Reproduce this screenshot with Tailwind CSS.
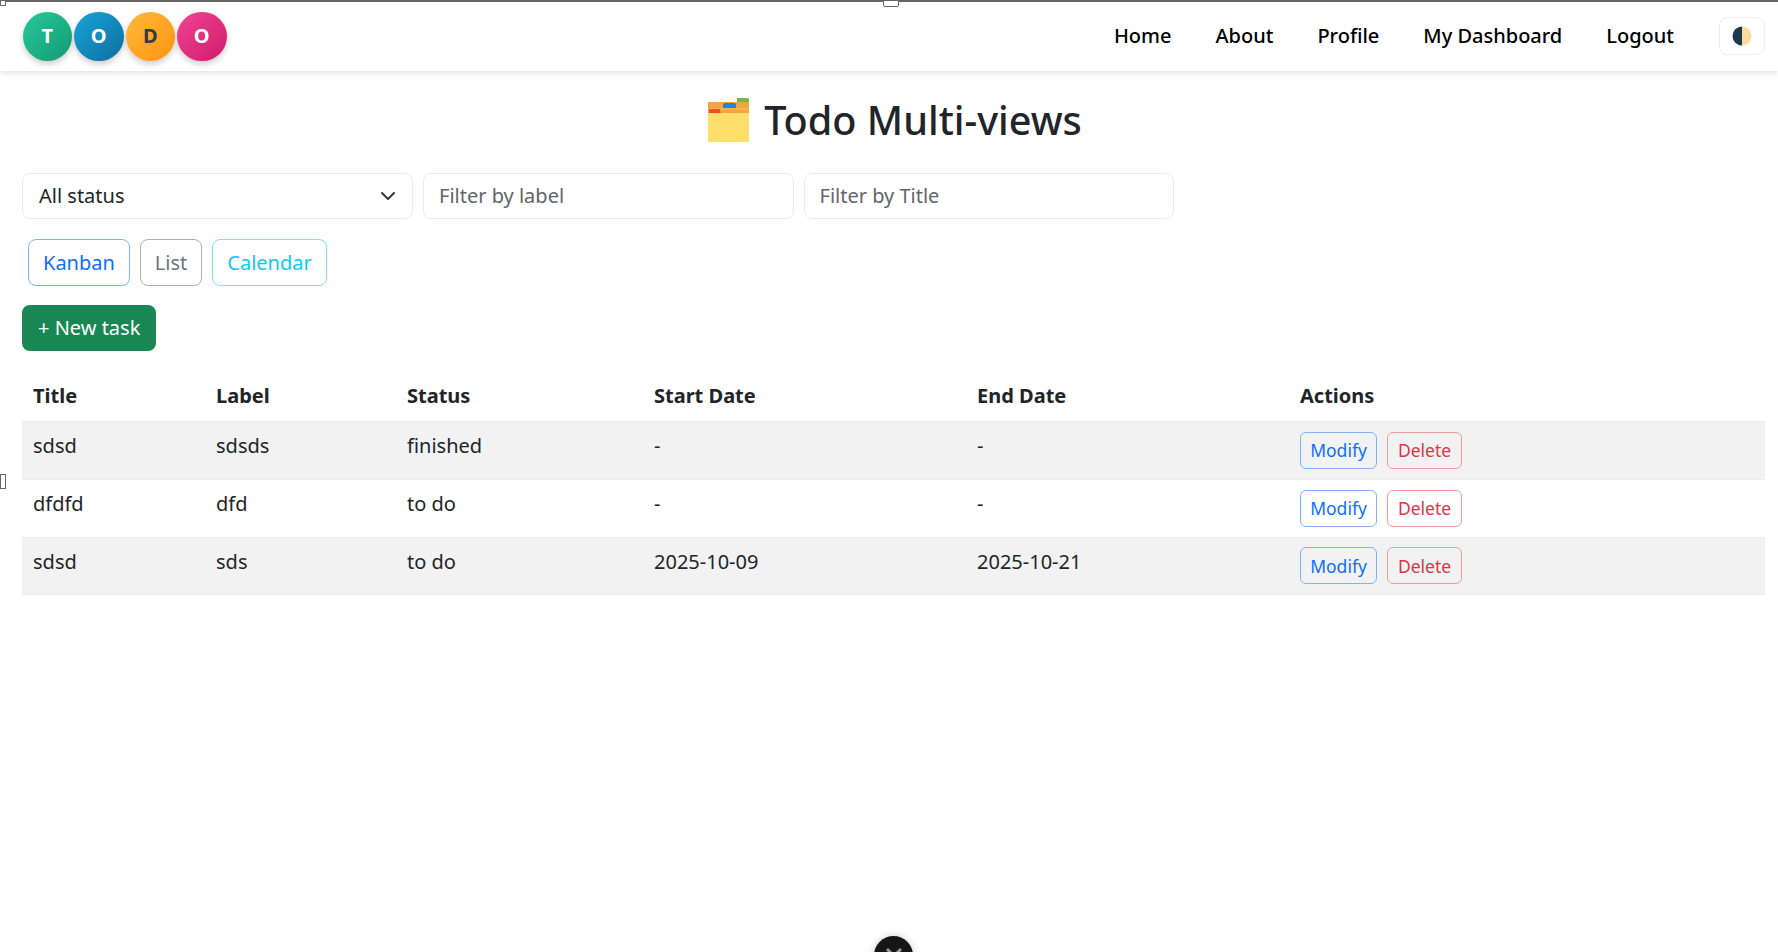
<!DOCTYPE html>
<html lang="en">
<head>
    <meta charset="utf-8">
    <title>Todo Multi-views</title>
    <script src="https://cdn.jsdelivr.net/npm/@tailwindcss/browser@4"></script>
</head>
<body class="relative h-[952px] overflow-hidden bg-white text-[20px] leading-[30px] text-[#212529] font-['Noto_Sans',sans-serif]">

    <!-- navbar -->
    <nav class="h-[71px] flex items-center justify-between pl-[22.5px] pr-[13px] bg-white shadow-[0_2px_6px_rgba(0,0,0,0.12)]">
        <div class="mt-[1px] flex gap-[2px] font-bold text-[20px]">
            <span class="w-[49.5px] h-[49px] rounded-full flex items-center justify-center text-white bg-gradient-to-br from-[#25c998] to-[#159a75] shadow-[0_3px_6px_rgba(0,0,0,0.2)]">T</span>
            <span class="w-[49.5px] h-[49px] rounded-full flex items-center justify-center text-white bg-gradient-to-br from-[#18a4d9] to-[#0f6f9f] shadow-[0_3px_6px_rgba(0,0,0,0.2)]">O</span>
            <span class="w-[49.5px] h-[49px] rounded-full flex items-center justify-center text-[#343a40] bg-gradient-to-br from-[#ffba38] to-[#ff920e] shadow-[0_3px_6px_rgba(0,0,0,0.2)]">D</span>
            <span class="w-[49.5px] h-[49px] rounded-full flex items-center justify-center text-white bg-gradient-to-br from-[#f04393] to-[#cf196b] shadow-[0_3px_6px_rgba(0,0,0,0.2)]">O</span>
        </div>
        <div class="flex items-center font-medium text-black">
            <a class="mr-[44px]">Home</a>
            <a class="mr-[44px]">About</a>
            <a class="mr-[44px]">Profile</a>
            <a class="mr-[44px]">My Dashboard</a>
            <a class="mr-[45px]">Logout</a>
            <button class="w-[46px] h-[38px] flex items-center justify-center bg-white border border-[#eeeeee] rounded-[8px]">
                <svg width="20" height="20" viewBox="0 0 20 20">
                    <path d="M10 0.5a9.5 9.5 0 0 0 0 19z" fill="#1d3a4a"/>
                    <path d="M10 0.5a9.5 9.5 0 0 1 0 19z" fill="#fbdc9c"/>
                </svg>
            </button>
        </div>
    </nav>

    <main class="pl-[22px] pr-[13px]">
        <h1 class="mt-[24px] h-[50px] pl-[3px] flex items-center justify-center gap-[14px] text-[39.6px] leading-[50px] font-medium">
            <svg width="42" height="44" viewBox="0 0 42 44">
                <path d="M29 0h10a2 2 0 0 1 2 2v6H29z" fill="#7cb342"/>
                <rect y="4" width="41" height="12" fill="#f2a641"/>
                <path d="M15 7a2 2 0 0 1 2-2h9a2 2 0 0 1 2 2v3H15z" fill="#1e88d8"/>
                <rect y="10" width="41" height="2" fill="#f9b43f"/>
                <path d="M1 12a1 1 0 0 1 1-1h9a1 1 0 0 1 1 1l1 4H1z" fill="#ef4a35"/>
                <rect y="15" width="41" height="29" fill="#ffdf6b"/>
            </svg>
            <span>Todo Multi-views</span>
        </h1>

        <!-- filters -->
        <div class="mt-[28px] flex gap-[10px]">
            <div class="w-[391px] h-[46px] px-[16px] flex items-center justify-between border border-[#e9ecef] rounded-[8px]">
                <span>All status</span>
                <svg class="mr-[1px]" width="14" height="9" viewBox="0 0 14 9" fill="none" stroke="#343a40" stroke-width="2" stroke-linecap="round" stroke-linejoin="round"><path d="M1 1l6 6 6-6"/></svg>
            </div>
            <div class="w-[370.5px] h-[46px] px-[15px] flex items-center border border-[#e9ecef] rounded-[8px] text-[#60666c]">Filter by label</div>
            <div class="w-[370.5px] h-[46px] px-[15px] flex items-center border border-[#e9ecef] rounded-[8px] text-[#60666c]">Filter by Title</div>
        </div>

        <!-- views -->
        <div class="mt-[20px] ml-[6px] flex gap-[10px]">
            <button class="h-[47px] px-[14px] border border-[#7fb2fe] rounded-[8px] text-[#0d6efd]">Kanban</button>
            <button class="h-[47px] px-[14px] border border-[#adb1b6] rounded-[8px] text-[#6c757d]">List</button>
            <button class="h-[47px] px-[14px] border border-[#7be2f8] rounded-[8px] text-[#0dcaf0]">Calendar</button>
        </div>

        <button class="mt-[19px] h-[46px] px-[16px] rounded-[8px] bg-[#198754] text-white">+ New task</button>

        <table class="mt-[21px] w-full table-fixed border-collapse">
            <colgroup>
                <col class="w-[184px]"><col class="w-[191px]"><col class="w-[247px]"><col class="w-[323px]"><col class="w-[323px]"><col>
            </colgroup>
            <thead>
                <tr class="h-[49px] text-left">
                    <th class="px-[11px] font-bold">Title</th>
                    <th class="px-[10px] font-bold">Label</th>
                    <th class="px-[10px] font-bold">Status</th>
                    <th class="px-[10px] font-bold">Start Date</th>
                    <th class="px-[10px] font-bold">End Date</th>
                    <th class="px-[10px] font-bold">Actions</th>
                </tr>
            </thead>
            <tbody class="border-t border-[#ececec]">
                <tr class="h-[58px] bg-[#f2f2f2] border-b border-[#ececec]">
                    <td class="px-[11px] pt-[9px] align-top">sdsd</td>
                    <td class="px-[10px] pt-[9px] align-top">sdsds</td>
                    <td class="px-[10px] pt-[9px] align-top">finished</td>
                    <td class="px-[10px] pt-[9px] align-top">-</td>
                    <td class="px-[10px] pt-[9px] align-top">-</td>
                    <td class="px-[10px] align-middle">
                        <div class="flex gap-[10px] text-[17.5px]">
                            <button class="w-[77px] h-[37px] border border-[#7fb2fe] rounded-[6px] text-[#0d6efd]">Modify</button>
                            <button class="w-[75px] h-[37px] border border-[#ed9aa2] rounded-[6px] text-[#dc3545]">Delete</button>
                        </div>
                    </td>
                </tr>
                <tr class="h-[58px] border-b border-[#ececec]">
                    <td class="px-[11px] pt-[9px] align-top">dfdfd</td>
                    <td class="px-[10px] pt-[9px] align-top">dfd</td>
                    <td class="px-[10px] pt-[9px] align-top">to do</td>
                    <td class="px-[10px] pt-[9px] align-top">-</td>
                    <td class="px-[10px] pt-[9px] align-top">-</td>
                    <td class="px-[10px] align-middle">
                        <div class="flex gap-[10px] text-[17.5px]">
                            <button class="w-[77px] h-[37px] border border-[#7fb2fe] rounded-[6px] text-[#0d6efd]">Modify</button>
                            <button class="w-[75px] h-[37px] border border-[#ed9aa2] rounded-[6px] text-[#dc3545]">Delete</button>
                        </div>
                    </td>
                </tr>
                <tr class="h-[57px] bg-[#f2f2f2] border-b border-[#ececec]">
                    <td class="px-[11px] pt-[9px] align-top">sdsd</td>
                    <td class="px-[10px] pt-[9px] align-top">sds</td>
                    <td class="px-[10px] pt-[9px] align-top">to do</td>
                    <td class="px-[10px] pt-[9px] align-top">2025-10-09</td>
                    <td class="px-[10px] pt-[9px] align-top">2025-10-21</td>
                    <td class="px-[10px] align-middle">
                        <div class="flex gap-[10px] text-[17.5px]">
                            <button class="w-[77px] h-[37px] border border-[#7fb2fe] rounded-[6px] text-[#0d6efd]">Modify</button>
                            <button class="w-[75px] h-[37px] border border-[#ed9aa2] rounded-[6px] text-[#dc3545]">Delete</button>
                        </div>
                    </td>
                </tr>
            </tbody>
        </table>
    </main>

    <!-- capture overlay: selection frame and close button -->
    <div class="absolute top-0 left-0 w-full h-[2px] bg-[#666666]"></div>
    <div class="absolute top-0 left-0 w-[6px] h-[6px] bg-white border border-[#666666]"></div>
    <div class="absolute top-0 left-[883px] w-[16px] h-[7px] bg-white border border-[#666666] rounded-b-[2px]"></div>
    <div class="absolute top-[474px] left-0 w-[6px] h-[15px] bg-white border border-[#666666]"></div>
    <div class="absolute top-[936px] left-[874px] w-[39px] h-[39px] rounded-full bg-[#161616] flex justify-center pt-[11px] shadow-[0_0_8px_rgba(0,0,0,0.2)]">
        <svg width="18" height="18" viewBox="0 0 18 18" fill="none" stroke="#9a9a9a" stroke-width="3"><path d="M2 2l14 14M16 2L2 16"/></svg>
    </div>

</body>
</html>
